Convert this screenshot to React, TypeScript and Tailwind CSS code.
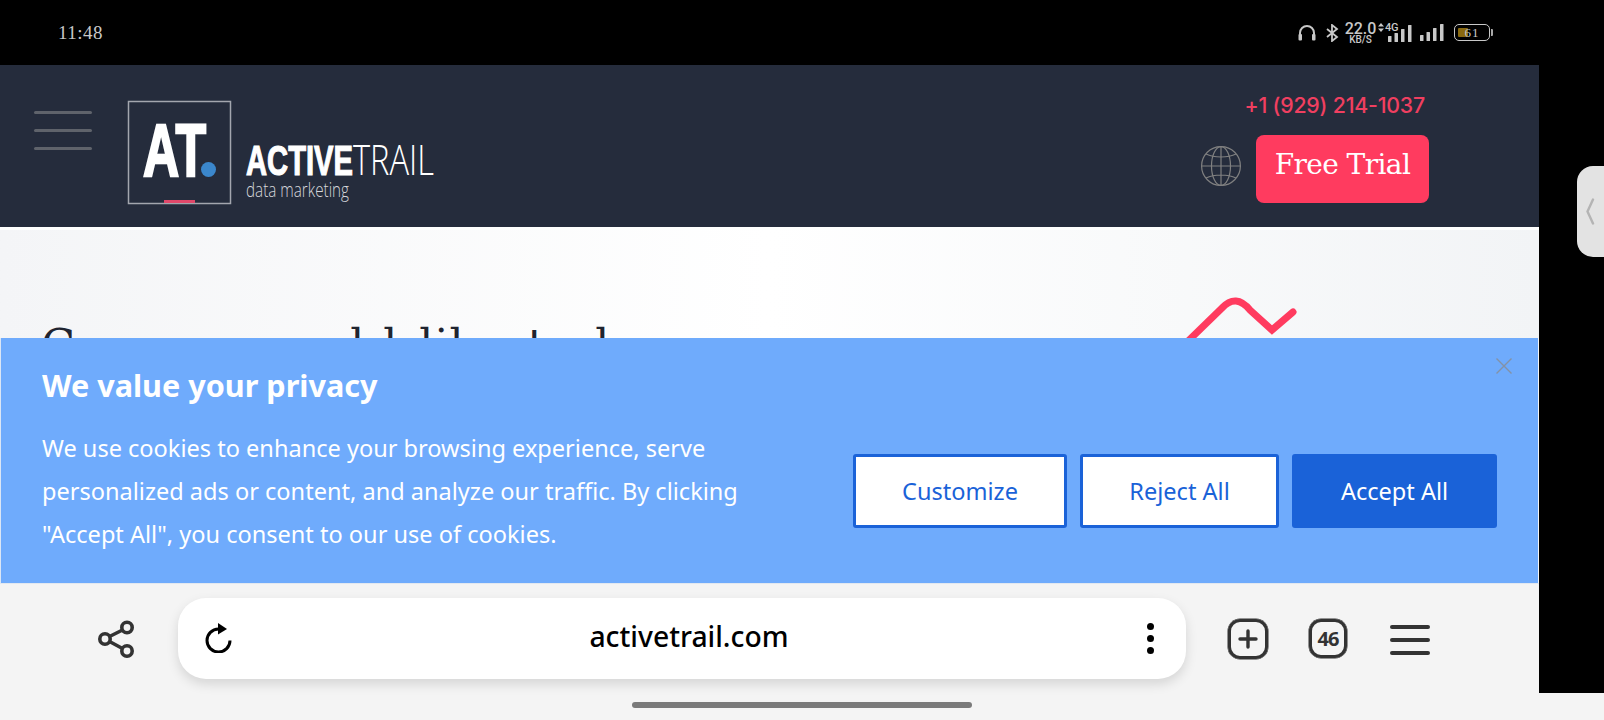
import React from 'react';

const Signal: React.FC = () => (
  <svg width="24" height="17" viewBox="0 0 24 17" fill="#c8c8c8">
    <rect x="0" y="11" width="3.5" height="6" rx="0.5" />
    <rect x="6.5" y="8" width="3.5" height="9" rx="0.5" />
    <rect x="13" y="4" width="3.5" height="13" rx="0.5" />
    <rect x="20" y="0" width="3.5" height="17" rx="0.5" />
  </svg>
);

const StatusBar: React.FC = () => (
  <div className="h-[65px] bg-black flex items-center justify-between pl-[58px] pr-[111px] text-[#c8c8c8]">
    <span className="mt-[1px] font-['Liberation_Serif',serif] text-[19px] tracking-[0.5px]">11:48</span>
    <div className="flex items-center">
      <svg width="18" height="17" viewBox="0 0 18 17" fill="none" stroke="#c8c8c8" strokeWidth="2">
        <path d="M2 12V9a7 7 0 0 1 14 0v3" />
        <rect x="0.5" y="10" width="3.5" height="6.5" rx="1" fill="#c8c8c8" stroke="none" />
        <rect x="14" y="10" width="3.5" height="6.5" rx="1" fill="#c8c8c8" stroke="none" />
      </svg>
      <svg className="ml-[10px]" width="13" height="18" viewBox="0 0 13 18" fill="none" stroke="#c8c8c8" strokeWidth="1.8">
        <path d="M1 5l10 8-5 4V1l5 4L1 13" />
      </svg>
      <div className="ml-[7px] flex flex-col items-center w-[29px] font-['Roboto',sans-serif]">
        <span className="text-[16px] leading-[13px] font-medium">22.0</span>
        <span className="text-[10px] leading-[9px] font-medium">KB/S</span>
      </div>
      <div className="ml-[3px] relative w-[34px] h-[18px]">
        <div className="flex justify-end h-full items-end">
          <Signal />
        </div>
        <div className="absolute left-0 -top-[1px] bg-black pr-[1px] flex items-center gap-[1px]">
          <svg width="6" height="9" viewBox="0 0 6 9" fill="#c8c8c8">
            <path d="M3 0l3 3.500H0zM3 9L0 5.500h6z" />
          </svg>
          <span className="font-['Roboto',sans-serif] text-[11px] leading-[10px] font-medium tracking-[-0.3px]">4G</span>
        </div>
      </div>
      <div className="ml-[8px]">
        <Signal />
      </div>
      <div className="ml-[10px] flex items-center">
        <div className="relative w-[36px] h-[17px] border border-[#c8c8c8] rounded-[5px] flex items-center justify-center">
          <div className="absolute left-[3px] top-[3px] bottom-[3px] w-[10px] bg-[#8a6a10] rounded-[1px]" />
          <span className="relative font-['Liberation_Serif',serif] text-[13px] leading-none tracking-[1px]">61</span>
        </div>
        <div className="w-[2px] h-[7px] bg-[#a8a8a8] ml-[1px] rounded-r-[1px]" />
      </div>
    </div>
  </div>
);

const Logo: React.FC = () => (
  <svg width="310" height="106" viewBox="0 0 310 106">
    <rect x="1.500" y="1.500" width="102" height="102" fill="none" stroke="#a3a6ae" strokeWidth="1.5" />
    <text x="16" y="76" fill="#fff" stroke="#fff" strokeWidth="2.4" fontFamily="Liberation Sans" fontWeight="700" fontSize="74" textLength="63" lengthAdjust="spacingAndGlyphs">AT</text>
    <circle cx="81.5" cy="69.5" r="7.5" fill="#3b87cc" />
    <rect x="37" y="100" width="31" height="3" fill="#e0486a" />
    <text x="119" y="75" fill="#fff" stroke="#fff" strokeWidth="1.2" fontFamily="Liberation Sans" fontWeight="700" fontSize="42" textLength="107" lengthAdjust="spacingAndGlyphs">ACTIVE</text>
    <text x="226" y="75" fill="#fff" fontFamily="Open Sans" fontWeight="300" fontSize="42" textLength="81" lengthAdjust="spacingAndGlyphs">TRAIL</text>
    <text x="119" y="97" fill="#d5d7db" fontFamily="Open Sans" fontWeight="300" fontSize="21" textLength="103" lengthAdjust="spacingAndGlyphs">data marketing</text>
  </svg>
);

const Header: React.FC = () => (
  <div className="h-[162px] bg-[#252c3c] flex items-start">
    <div className="ml-[34px] mt-[46px] w-[58px] flex flex-col gap-[15px]">
      <div className="h-[3px] bg-[#5f636b] rounded-full" />
      <div className="h-[3px] bg-[#5f636b] rounded-full" />
      <div className="h-[3px] bg-[#5f636b] rounded-full" />
    </div>
    <div className="ml-[35px] mt-[35px]">
      <Logo />
    </div>
    <div className="ml-auto mr-[110px] mt-[28px] flex flex-col items-end">
      <span className="mr-[4px] font-['Inter',sans-serif] text-[21.300px] leading-[24px] font-medium tracking-[-0.2px] text-[#f03f60]">+1 (929) 214-1037</span>
      <div className="mt-[18px] flex items-start gap-[15px]">
        <svg className="mt-[11px]" width="40" height="40" viewBox="0 0 40 40" fill="none" stroke="#808080" strokeWidth="1.2">
          <circle cx="20" cy="20" r="19.4" />
          <ellipse cx="20" cy="20" rx="9.5" ry="19.4" />
          <path d="M20 .6v38.8M.6 20h38.8M5 8c8 4 22 4 30 0M5 32c8-4 22-4 30 0" />
        </svg>
        <button className="w-[173px] h-[68px] bg-[#ff3b5f] rounded-[8px] pb-[9px] text-white font-['DejaVu_Serif',serif] text-[28px] tracking-[-0.6px]">Free Trial</button>
      </div>
    </div>
  </div>
);

const Hero: React.FC = () => (
  <div className="h-[108px] overflow-hidden flex items-start bg-linear-to-r from-[#f4f5f7] via-white to-[#f2f4f6]">
    <div className="pl-[41px] pt-[94px] flex font-['DejaVu_Serif',serif] text-[44px] leading-none text-[#1f2430]">
      <span>G</span>
      <span className="ml-[274px]">l</span>
      <span className="ml-[19px]">l</span>
      <span className="ml-[22px]">l</span>
      <span className="ml-[1px]">i</span>
      <span className="ml-[1px]">l</span>
      <span className="ml-[64px]">t</span>
      <span className="ml-[50px]">l</span>
    </div>
    <svg className="ml-auto mr-[239px] mt-[65px] overflow-visible" width="120" height="43" viewBox="0 0 120 43" fill="none" stroke="#ff3b5f" strokeWidth="7" strokeLinecap="round">
      <path d="M4 50L42 13Q56 -2 70 15L92 35L113 17" />
    </svg>
  </div>
);

const CookieBanner: React.FC = () => (
  <div className="relative h-[245px] mr-[1px] bg-[#6fabfc] border-l border-[#dbe6f5] flex items-start font-['Noto_Sans',sans-serif] text-white">
    <div className="pl-[41px] pt-[26px] w-[780px]">
      <h2 className="text-[30.6px] leading-[42px] font-bold">We value your privacy</h2>
      <p className="mt-[21px] w-[720px] text-[23.55px] leading-[43px]">
        We use cookies to enhance your browsing experience, serve personalized ads or content, and analyze our traffic. By clicking "Accept All", you consent to our use of cookies.
      </p>
    </div>
    <div className="ml-auto mr-[41px] mt-[116px] flex">
      <button className="w-[214px] h-[74px] pt-[2px] bg-white border-[3px] border-[#1a62d8] rounded-[3px] text-[23.55px] text-[#1a62d8]">Customize</button>
      <button className="ml-[13px] w-[199px] h-[74px] pt-[2px] bg-white border-[3px] border-[#1a62d8] rounded-[3px] text-[23.55px] text-[#1a62d8]">Reject All</button>
      <button className="ml-[13px] w-[205px] h-[74px] pt-[2px] bg-[#1a62d8] rounded-[3px] text-[23.55px] text-white">Accept All</button>
    </div>
    <svg className="absolute right-[26px] top-[20px]" width="16" height="16" viewBox="0 0 16 16" stroke="#8492a6" strokeWidth="1.4">
      <path d="M.5.5l15 15M15.500.5l-15 15" />
    </svg>
  </div>
);

const Toolbar: React.FC = () => (
  <div className="h-[110px] flex items-start border-t border-[#e2e8f0] text-[#333]">
    <svg className="ml-[98px] mt-[36px]" width="36" height="38" viewBox="0 0 36 38" fill="none" stroke="#333" strokeWidth="3.6">
      <circle cx="29" cy="7.500" r="5.200" />
      <circle cx="7" cy="19" r="5.200" />
      <circle cx="29" cy="31" r="5.200" />
      <path d="M11.500 16.500l13-6.500M11.500 21.500l13 7" />
    </svg>
    <div className="ml-[44px] mt-[14px] w-[1008px] h-[81px] bg-white rounded-[28px] shadow-[0_5px_12px_rgba(0,0,0,0.13)] flex items-center pl-[27px] pr-[32px]">
      <svg className="-mt-[2px]" width="28" height="31" viewBox="0 0 28 31" fill="none" stroke="#000" strokeWidth="3">
        <path d="M25 18.500a11.500 11.500 0 1 1-11.500-11.500" />
        <path d="M13 1l9 6-9 5.500z" fill="#000" stroke="none" />
      </svg>
      <span className="flex-1 -mt-[4px] pr-[2px] text-center font-['Noto_Sans',sans-serif] text-[28.3px] font-medium text-black">activetrail.com</span>
      <div className="flex flex-col gap-[5px]">
        <div className="w-[7px] h-[7px] rounded-full bg-black" />
        <div className="w-[7px] h-[7px] rounded-full bg-black" />
        <div className="w-[7px] h-[7px] rounded-full bg-black" />
      </div>
    </div>
    <div className="ml-[42px] mt-[35px] w-[40px] h-[40px] border-[3px] border-[#333] shadow-[0_0_0_0.5px_#333] rounded-[12px] flex items-center justify-center">
      <svg width="20" height="20" viewBox="0 0 20 20" stroke="#333" strokeWidth="3.4" strokeLinecap="round">
        <path d="M10 2v16M2 10h16" />
      </svg>
    </div>
    <div className="ml-[41px] mt-[35px] w-[38px] h-[39px] border-[3px] border-[#333] shadow-[0_0_0_0.5px_#333] rounded-[12px] flex items-center justify-center font-['Noto_Sans',sans-serif] font-bold text-[20px] tracking-[-1px]">46</div>
    <div className="ml-[43px] mt-[41px] w-[40px] flex flex-col gap-[9px]">
      <div className="h-[4px] bg-[#333] rounded-full" />
      <div className="h-[4px] bg-[#333] rounded-full" />
      <div className="h-[4px] bg-[#333] rounded-full" />
    </div>
  </div>
);

const App: React.FC = () => {
  return (
    <div className="w-[1604px] h-[720px] overflow-hidden bg-[#f4f4f4]">
      <StatusBar />
      <div className="flex h-[628px]">
        <div className="w-[1539px]">
          <Header />
          <div className="h-[3px] bg-white" />
          <Hero />
          <CookieBanner />
          <Toolbar />
        </div>
        <div className="flex-1 bg-black pt-[101px] pl-[38px]">
          <div className="h-[91px] bg-[#e3e3e3] rounded-l-[16px] pl-[8px] pt-[32px]">
            <svg width="10" height="27" viewBox="0 0 10 27" fill="none" stroke="#b4b4b4" strokeWidth="2.4" strokeLinecap="round">
              <path d="M8 1.500L2.500 13.500L8 25.500" />
            </svg>
          </div>
        </div>
      </div>
      <div className="h-[27px] flex justify-center pt-[9px]">
        <div className="w-[340px] h-[6px] rounded-full bg-[#7a7a7a]" />
      </div>
    </div>
  );
};

export default App;
